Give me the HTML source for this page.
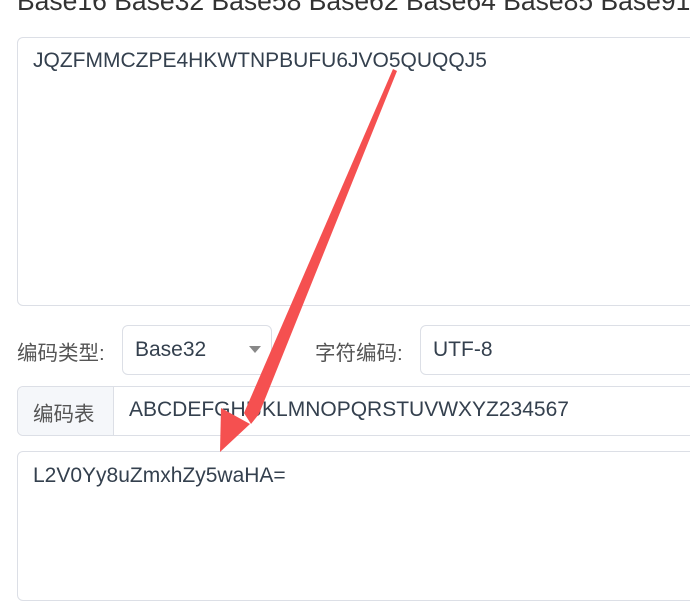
<!DOCTYPE html>
<html><head><meta charset="utf-8"><style>
body{margin:0;width:690px;height:563px;overflow:hidden;background:#fff;font-family:"Liberation Sans","Noto Sans CJK SC",sans-serif;color:#34404e;position:relative}
.a{position:absolute;white-space:nowrap}
.box{position:absolute;border:1px solid #dcdfe6;border-radius:6px;background:#fff;box-sizing:border-box}
</style></head><body>
<div class="a" style="left:17px;top:-14px;font-size:26.5px;color:#333">Base16 Base32 Base58 Base62 Base64 Base85 Base91</div>
<div class="box" style="left:17px;top:37px;width:700px;height:269px"></div>
<div class="a" style="left:33px;top:49px;font-size:21px">JQZFMMCZPE4HKWTNPBUFU6JVO5QUQQJ5</div>
<div class="a" style="left:17px;top:336px;font-size:20.5px;color:#555">编码类型:</div>
<div class="box" style="left:122px;top:325px;width:150px;height:50px"></div>
<div class="a" style="left:135px;top:338px;font-size:21px">Base32</div>
<div class="a" style="left:249px;top:346px;width:0;height:0;border-left:6px solid transparent;border-right:6px solid transparent;border-top:7px solid #888"></div>
<div class="a" style="left:315px;top:336px;font-size:20.5px;color:#555">字符编码:</div>
<div class="box" style="left:420px;top:325px;width:300px;height:50px"></div>
<div class="a" style="left:433px;top:338px;font-size:21px">UTF-8</div>
<div class="box" style="left:17px;top:386px;width:700px;height:50px"></div>
<div class="a" style="left:18px;top:387px;width:95px;height:48px;background:#f5f7fa;border-right:1px solid #dcdfe6;border-radius:6px 0 0 6px"></div>
<div class="a" style="left:33px;top:397px;font-size:20.5px;color:#555">编码表</div>
<div class="a" style="left:129px;top:398px;font-size:21px">ABCDEFGHIJKLMNOPQRSTUVWXYZ234567</div>
<div class="box" style="left:17px;top:451px;width:700px;height:150px"></div>
<div class="a" style="left:33px;top:464px;font-size:21px">L2V0Yy8uZmxhZy5waHA=</div>
<svg class="a" style="left:0;top:0" width="690" height="563"><polygon fill="#f55050" points="393,69 397,71 259,414 251,424 244,413" /><polygon fill="#f55050" points="220,452 221,408 250,424" /></svg>
</body></html>
